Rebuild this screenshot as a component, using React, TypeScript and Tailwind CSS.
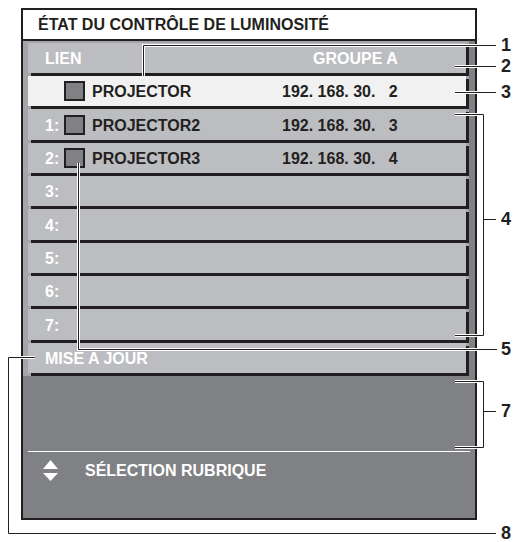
import React from 'react';

const font = { fontFamily: '"Liberation Sans", Arial, sans-serif' };

interface Row {
  label: string;
  name?: string;
  ip?: string;
  selected?: boolean;
  tall?: boolean;
}

const rows: Row[] = [
  { label: '', name: 'PROJECTOR', ip: '2', selected: true },
  { label: '1:', name: 'PROJECTOR2', ip: '3', tall: true },
  { label: '2:', name: 'PROJECTOR3', ip: '4' },
  { label: '3:' },
  { label: '4:', tall: true },
  { label: '5:' },
  { label: '6:' },
  { label: '7:', tall: true },
];

const Bar = ({ tall, selected, children }: { tall?: boolean; selected?: boolean; children?: React.ReactNode }) => (
  <div className={tall ? 'h-[34px]' : 'h-[33px]'}>
    <div
      className={`${tall ? 'h-[31px]' : 'h-[30px]'} w-[438px] flex items-center shadow-[3px_3px_0_#231f20] ${
        selected ? 'bg-[#f1f1f2]' : 'bg-[#bcbdc0]'
      }`}
    >
      {children}
    </div>
  </div>
);

const Swatch = () => <div className="w-[21px] h-[20px] border-2 border-[#231f20] bg-[#808184] shrink-0" />;

const Callouts = () => (
  <svg className="absolute inset-0 pointer-events-none" width={514} height={542}>
    {[
      'M143.5 76 V45.5 H496',
      'M455 66.5 H496',
      'M455 92.5 H496',
      'M455 114.5 H483.5 V335.5 H455 M483.5 219.5 H496',
      'M78.5 163 V349.5 H497',
      'M455 381.5 H483.5 V447.5 H455 M483.5 411.5 H496',
      'M35 357.5 H8.5 V533.5 H496',
    ].map((d, i) => (
      <g key={i} fill="none">
        <path d={d} stroke="#ffffff" strokeWidth={3} />
        <path d={d} stroke="#231f20" strokeWidth={1} />
      </g>
    ))}
  </svg>
);

const numbers: [string, number][] = [
  ['1', 45],
  ['2', 66],
  ['3', 92],
  ['4', 219],
  ['5', 349],
  ['7', 411],
  ['8', 533],
];

export default function App() {
  return (
    <div className="relative w-[514px] h-[542px] bg-white overflow-hidden" style={font}>
      <div className="pt-[8px] pl-[21px]">
        <div className="w-[456px] h-[33px] border-2 border-[#231f20] bg-white flex items-center pl-[15px]">
          <span className="text-[16px] font-bold text-[#231f20] leading-none">ÉTAT DU CONTRÔLE DE LUMINOSITÉ</span>
        </div>

        <div className="w-[456px] h-[479px] border-x-2 border-b-2 border-[#231f20] bg-[#808184] flex flex-col">
          <div className="flex bg-[#a4a5a8]">
            <div className="pl-[5px] pt-[2px] w-[446px] flex flex-col">
              <Bar>
                <span className="pt-[2px] pl-[17px] w-[285px] shrink-0 text-[16px] font-bold text-white">LIEN</span>
                <span className="pt-[2px] text-[16px] font-bold text-white">GROUPE A</span>
              </Bar>
              {rows.map((r, i) => (
                <Bar key={i} tall={r.tall} selected={r.selected}>
                  <span className="pt-[2px] pl-[17px] w-[36px] shrink-0 text-[16px] font-bold text-white">{r.label}</span>
                  {r.name && (
                    <>
                      <Swatch />
                      <span className="pt-[2px] pl-[7px] w-[197px] shrink-0 text-[16px] font-bold text-[#231f20]">
                        {r.name}
                      </span>
                      <span className="pt-[2px] text-[16px] font-bold text-[#231f20] whitespace-pre">{`192. 168. 30.   ${r.ip}`}</span>
                    </>
                  )}
                </Bar>
              ))}
              <Bar>
                <span className="pt-[2px] pl-[17px] text-[16px] font-bold text-white">MISE A JOUR</span>
              </Bar>
            </div>
            <div className="w-[6px] bg-[#808184]" />
          </div>

          <div className="flex-1 flex flex-col pl-[5px]">
            <div className="h-[75px]" />
            <div className="w-[442px] h-px bg-white" />
            <div className="flex items-center pt-[7px] pl-[15px] gap-[27px]">
              <svg width={15} height={22} viewBox="0 0 15 22" className="shrink-0">
                <polygon points="0,9 7.5,0 15,9" fill="#ffffff" />
                <polygon points="0,13 15,13 7.5,21" fill="#ffffff" />
              </svg>
              <span className="text-[16px] font-bold text-white">SÉLECTION RUBRIQUE</span>
            </div>
          </div>
        </div>
      </div>

      <Callouts />
      {numbers.map(([n, y]) => (
        <div
          key={n}
          className="absolute left-[501px] text-[18px] font-bold text-[#231f20] leading-none"
          style={{ top: y - 9 }}
        >
          {n}
        </div>
      ))}
    </div>
  );
}
